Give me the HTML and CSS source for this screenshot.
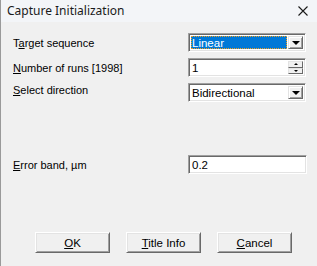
FILE: index.html
```html
<!DOCTYPE html>
<html>
<head>
    <title>Capture Initialization</title>
    <link rel="stylesheet" href="styles.css">
</head>
<body>
<div class="window">
    <div class="titlebar">
        <span class="title">Capture Initialization</span>
        <svg class="close" width="10" height="10" viewBox="0 0 10 10">
            <path d="M0.5 0.5 L9.5 9.5 M9.5 0.5 L0.5 9.5" stroke="#1a1a1a" stroke-width="1.1" fill="none"/>
        </svg>
    </div>

    <div class="content">
        <div class="row row-first">
            <label class="label">T<u>a</u>rget sequence</label>
            <div class="field combo">
                <div class="combo-text selected"><span>Linear</span></div>
                <div class="drop-btn"><span class="arrow-down"></span></div>
            </div>
        </div>

        <div class="row">
            <label class="label"><u>N</u>umber of runs [1998]</label>
            <div class="field spin">
                <div class="combo-text">1</div>
                <div class="spin-btns">
                    <div class="spin-btn"><span class="arrow-up small"></span></div>
                    <div class="spin-btn"><span class="arrow-down small"></span></div>
                </div>
            </div>
        </div>

        <div class="row">
            <label class="label label-high"><u>S</u>elect direction</label>
            <div class="field combo">
                <div class="combo-text">Bidirectional</div>
                <div class="drop-btn"><span class="arrow-down"></span></div>
            </div>
        </div>

        <div class="row row-error">
            <label class="label"><u>E</u>rror band, µm</label>
            <div class="field edit">
                <div class="combo-text">0.2</div>
            </div>
        </div>

        <div class="buttons">
            <button class="btn"><u>O</u>K</button>
            <button class="btn"><u>T</u>itle Info</button>
            <button class="btn"><u>C</u>ancel</button>
        </div>
    </div>
</div>
</body>
</html>
```

FILE: styles.css
```css
html, body {
    margin: 0;
    padding: 0;
    width: 317px;
    height: 266px;
    overflow: hidden;
    background-color: #f0f0f0;
}

.window {
    height: 266px;
    border-left: 1px solid #9a9a9a;
    box-sizing: border-box;
    font-family: "Liberation Sans", Arial, sans-serif;
    font-size: 11px;
    color: #000;
}

.titlebar {
    height: 22px;
    background-color: #f3f5f8;
    display: flex;
    align-items: center;
    justify-content: space-between;
    padding: 0 9px 0 6px;
}

.title {
    font-family: "Noto Sans", "Open Sans", sans-serif;
    font-size: 12px;
    color: #1a1a1a;
    margin-top: -1px;
}

.close {
    margin-top: -1px;
}

.content {
    padding: 11px 10px 0 12px;
    display: flex;
    flex-direction: column;
}

.row {
    display: flex;
    align-items: center;
    justify-content: space-between;
    height: 19px;
    margin-top: 6px;
}

.row-first {
    margin-top: 0;
}

.row-error {
    margin-top: 53px;
}

.label-high {
    margin-top: -5px;
}

u {
    text-decoration: underline;
    text-underline-offset: 1px;
}

/* sunken fields */
.field {
    width: 118px;
    height: 19px;
    margin-right: 1px;
    box-sizing: border-box;
    background: #fff;
    border-top: 1px solid #a0a0a0;
    border-left: 1px solid #a0a0a0;
    border-right: 1px solid #fff;
    border-bottom: 1px solid #fff;
    box-shadow: inset 1px 1px 0 #696969, inset -1px -1px 0 #e3e3e3;
    display: flex;
    align-items: stretch;
    padding: 2px;
}

.field.edit {
    width: 119px;
    margin-right: 0;
}

.combo-text {
    flex: 1;
    display: flex;
    align-items: center;
    padding-left: 1px;
    font-size: 11.5px;
}

.combo-text.selected {
    background-color: #0078d7;
    color: #fff;
    outline: 1px dotted #f0a020;
    outline-offset: -1px;
    margin-right: 1px;
}

.drop-btn {
    width: 15px;
    background: #f0f0f0;
    box-sizing: border-box;
    border-top: 1px solid #e3e3e3;
    border-left: 1px solid #e3e3e3;
    border-right: 1px solid #696969;
    border-bottom: 1px solid #696969;
    box-shadow: inset 1px 1px 0 #fff, inset -1px -1px 0 #a0a0a0;
    display: flex;
    align-items: center;
    justify-content: center;
}

.arrow-down {
    width: 0;
    height: 0;
    border-left: 4px solid transparent;
    border-right: 4px solid transparent;
    border-top: 4px solid #000;
    margin-top: 1px;
}

.arrow-up {
    width: 0;
    height: 0;
    border-left: 4px solid transparent;
    border-right: 4px solid transparent;
    border-bottom: 4px solid #000;
}

.arrow-down.small {
    border-left-width: 2px;
    border-right-width: 2px;
    border-top-width: 2px;
    margin-top: 0;
}

.arrow-up.small {
    border-left-width: 2px;
    border-right-width: 2px;
    border-bottom-width: 2px;
}

.spin-btns {
    width: 15px;
    display: flex;
    flex-direction: column;
}

.spin-btn {
    flex: 1;
    background: #f0f0f0;
    box-sizing: border-box;
    border-top: 1px solid #e3e3e3;
    border-left: 1px solid #e3e3e3;
    border-right: 1px solid #696969;
    border-bottom: 1px solid #696969;
    display: flex;
    align-items: center;
    justify-content: center;
}

.buttons {
    display: flex;
    gap: 16px;
    margin-top: 58px;
    padding-left: 22px;
}

.btn {
    width: 75px;
    height: 21px;
    box-sizing: border-box;
    background: #f0f0f0;
    font-family: "Liberation Sans", Arial, sans-serif;
    font-size: 11.5px;
    font-weight: normal;
    color: #000;
    padding: 0;
    border-top: 1px solid #fff;
    border-left: 1px solid #fff;
    border-right: 1px solid #696969;
    border-bottom: 1px solid #696969;
    box-shadow: inset 1px 1px 0 #e3e3e3, inset -1px -1px 0 #a0a0a0;
}
```
